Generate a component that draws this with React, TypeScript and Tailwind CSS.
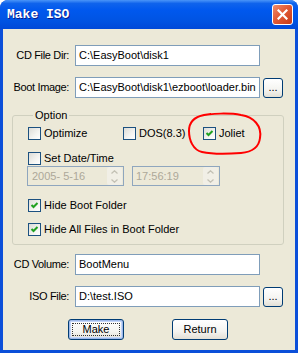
import React from "react";

function Check({ on }: { on?: boolean }) {
  return (
    <span className="flex h-[13px] w-[13px] shrink-0 items-center justify-center border border-[#1C5180] bg-[linear-gradient(135deg,#DCDCD7_0%,#F4F4F1_60%,#FFFFFF_100%)]">
      {on && (
        <svg width="11" height="11" viewBox="0 0 11 11">
          <polyline points="2.5,5 4.5,7 8.5,3" fill="none" stroke="#21A121" strokeWidth="2" />
        </svg>
      )}
    </span>
  );
}

function Box({ label, on, className }: { label: string; on?: boolean; className?: string }) {
  return (
    <div className={"flex h-[13px] items-center " + (className ?? "")}>
      <Check on={on} />
      <span className="ml-[3px] leading-[13px]">{label}</span>
    </div>
  );
}

function XpButton({ children, focus, className }: { children: React.ReactNode; focus?: boolean; className?: string }) {
  return (
    <button
      className={
        "relative flex items-center justify-center rounded-[3px] border border-[#003C74] bg-[linear-gradient(to_bottom,#FFFFFF_0%,#F4F4F0_60%,#E3E0D6_100%)] text-[11px] text-black " +
        (focus ? "shadow-[inset_0_0_0_1px_#9DB8E8,inset_0_0_0_2px_#C4D6FA] " : "") +
        (className ?? "")
      }
    >
      {focus && <span className="absolute inset-[3px] border border-dotted border-[#333]" />}
      {children}
    </button>
  );
}

function Field({ value, className }: { value: string; className?: string }) {
  return (
    <div className={"flex h-[21px] w-[185px] items-center border border-[#7F9DB9] bg-white px-[3px] " + (className ?? "")}>
      <span className="whitespace-nowrap">{value}</span>
    </div>
  );
}

function Spinner() {
  return (
    <div className="flex h-[18px] w-[15px] flex-col rounded-[2px] bg-[#F1EFE6]">
      <div className="flex flex-1 items-center justify-center">
        <svg width="7" height="4" viewBox="0 0 7 4">
          <polyline points="0.5,3.5 3.5,0.8 6.5,3.5" fill="none" stroke="#C3C1B5" strokeWidth="1.3" />
        </svg>
      </div>
      <div className="flex flex-1 items-center justify-center">
        <svg width="7" height="4" viewBox="0 0 7 4">
          <polyline points="0.5,0.5 3.5,3.2 6.5,0.5" fill="none" stroke="#C3C1B5" strokeWidth="1.3" />
        </svg>
      </div>
    </div>
  );
}

function Row({ label, children, className }: { label: string; children: React.ReactNode; className?: string }) {
  return (
    <div className={"flex h-[21px] items-center " + (className ?? "")}>
      <span className="w-[66px] whitespace-nowrap text-right tracking-[-0.35px]">{label}</span>
      <div className="ml-[6px] flex items-center">{children}</div>
    </div>
  );
}

export default function App() {
  return (
    <div className="flex h-[353px] w-[298px] flex-col overflow-hidden rounded-t-[8px] bg-[#0B4FD9] font-['Liberation_Sans',Arial,sans-serif] text-[11px] text-black">
      <div className="flex h-[29px] shrink-0 items-center justify-between bg-[linear-gradient(to_bottom,#4A95F8_0%,#0F63EC_12%,#0058EE_35%,#0054E3_70%,#0049D8_100%)] pl-[7px] pr-[5px]">
        <span className="font-['Liberation_Mono',monospace] text-[13px] font-bold text-white [text-shadow:1px_1px_#0A1A8C]">
          Make ISO
        </span>
        <div className="flex h-[21px] w-[21px] items-center justify-center rounded-[3px] border border-white bg-[linear-gradient(135deg,#F08C6C_0%,#E25A36_45%,#C63A17_100%)]">
          <svg width="11" height="11" viewBox="0 0 11 11">
            <path d="M1.5 1.5 L9.5 9.5 M9.5 1.5 L1.5 9.5" stroke="white" strokeWidth="2.2" strokeLinecap="square" />
          </svg>
        </div>
      </div>

      <div className="mx-[3px] mb-[3px] flex-1 bg-[#ECE9D8] pt-[16px]">
        <Row label="CD File Dir:">
          <Field value="C:\EasyBoot\disk1" />
        </Row>
        <Row label="Boot Image:" className="mt-[11px]">
          <Field value="C:\EasyBoot\disk1\ezboot\loader.bin" />
          <XpButton className="ml-[3px] h-[20px] w-[20px]">...</XpButton>
        </Row>

        <div className="relative ml-[9px] mt-[11px] w-[272px]">
          <fieldset className="rounded-[3px] border border-[#D0D0BF] pb-[8px] pl-[15px] pt-[6px]">
            <legend className="ml-[5px] px-[2px] leading-[12px]">Option</legend>
            <div className="flex">
              <Box label="Optimize" className="w-[95px]" />
              <Box label="DOS(8.3)" className="w-[80px]" />
              <Box label="Joliet" on />
            </div>
            <Box label="Set Date/Time" className="mt-[12px]" />
            <div className="ml-[-1px] mt-[1px] flex">
              <div className="flex h-[20px] w-[97px] items-center justify-between border border-[#8FA6BE] pl-[4px] pr-[1px] text-[#ACA899]">
                <span>2005- 5-16</span>
                <Spinner />
              </div>
              <div className="ml-[8px] flex h-[20px] w-[88px] items-center justify-between border border-[#8FA6BE] pl-[3px] pr-[1px] text-[#ACA899]">
                <span>17:56:19</span>
                <Spinner />
              </div>
            </div>
            <Box label="Hide Boot Folder" on className="mt-[13px]" />
            <Box label="Hide All Files in Boot Folder" on className="mt-[11px]" />
          </fieldset>

          <svg className="absolute left-[174px] top-[3px] overflow-visible" width="78" height="45" viewBox="0 0 78 45">
            <path
              d="M14 4 C25 1, 45 1, 55 3 C68 5, 76 14, 74 26 C73 35, 66 40, 55 41 C42 42, 25 42, 16 40 C7 38, 3 28, 3 19 C3 10, 8 5, 18 3 L25 2"
              fill="none"
              stroke="#FF0000"
              strokeWidth="2"
            />
          </svg>
        </div>

        <Row label="CD Volume:" className="mt-[9px]">
          <Field value="BootMenu" />
        </Row>
        <Row label="ISO File:" className="mt-[11px]">
          <Field value="D:\test.ISO" />
          <XpButton className="ml-[3px] h-[20px] w-[20px]">...</XpButton>
        </Row>

        <div className="ml-[65px] mt-[12px] flex gap-[48px]">
          <XpButton focus className="h-[21px] w-[56px]">
            Make
          </XpButton>
          <XpButton className="h-[21px] w-[56px]">Return</XpButton>
        </div>
      </div>
    </div>
  );
}
